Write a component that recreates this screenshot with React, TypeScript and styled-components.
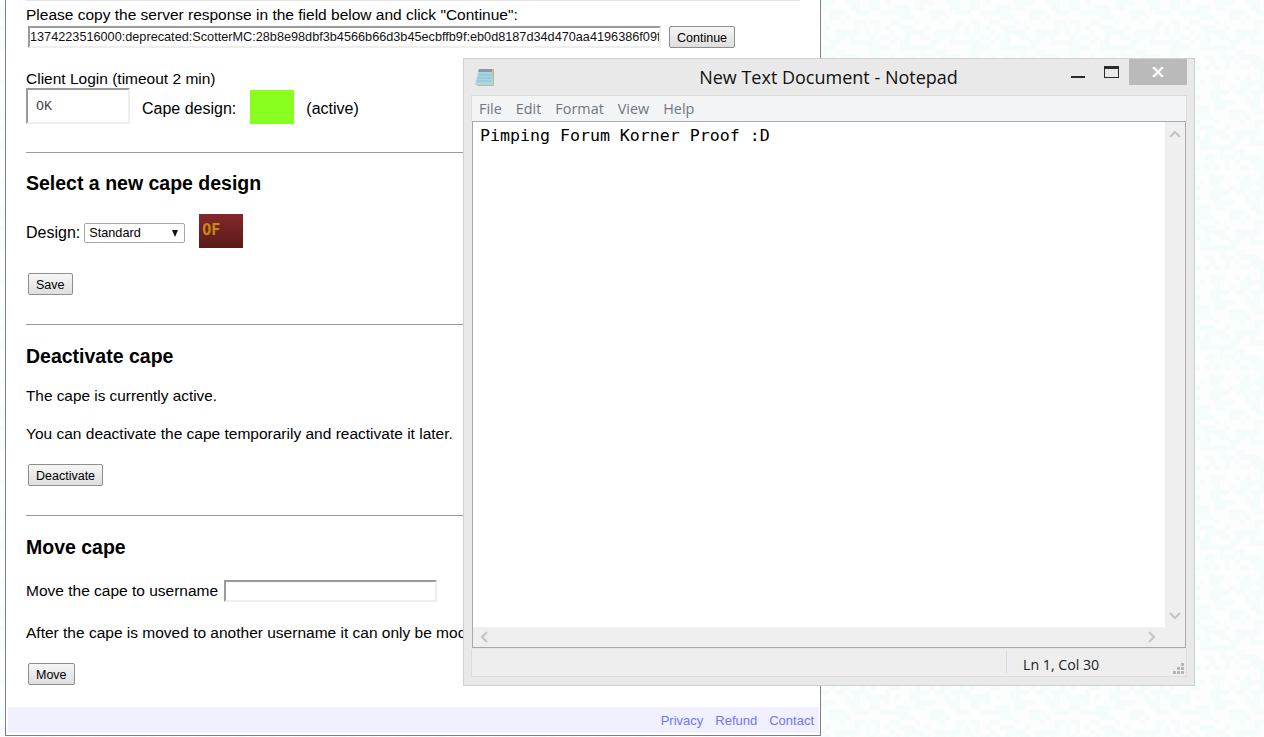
import React from 'react'
import styled, { createGlobalStyle } from 'styled-components'

// pale speckled page background, same tile repeated
const buildTile = () => {
  let cells = ''
  let seed = 7
  for (let y = 0; y < 100; y += 5) {
    for (let x = 0; x < 100; x += 5) {
      seed = (seed * 137 + 59) % 1009
      if (seed % 5 < 2) cells += `M${x} ${y}h${seed % 3 === 0 ? 10 : 5}v5h-${seed % 3 === 0 ? 10 : 5}z`
    }
  }
  const svg = `<svg xmlns='http://www.w3.org/2000/svg' width='100' height='100' shape-rendering='crispEdges'><path fill='#f4fcfc' d='${cells}'/></svg>`
  return `url("data:image/svg+xml,${encodeURIComponent(svg)}")`
}

const Global = createGlobalStyle`
  html, body {
    margin: 0;
    height: 737px;
    overflow: hidden;
    background-color: #fcfefe;
    background-image: ${buildTile()};
    font-family: "Liberation Sans", Arial, sans-serif;
    font-size: 16px;
    color: #000;
  }
`

const Page = styled.div`
  position: relative;
  width: 1264px;
  height: 737px;
  overflow: hidden;
`

const Panel = styled.div`
  box-sizing: border-box;
  width: 816px;
  height: 736px;
  margin-left: 5px;
  background: #fff;
  border-left: 1px solid #808080;
  border-right: 1px solid #808080;
  border-bottom: 1px solid #808080;
  padding: 0 1px 2px 2px;
  display: flex;
  flex-direction: column;
`

const Content = styled.div`
  flex: 1;
  padding: 0 19px 0 18px;
  font-size: 15.5px;
`

const TopRule = styled.div`
  height: 1px;
  background: #e4e4e4;
  margin-bottom: 5px;
`

const Line = styled.div`
  line-height: 18px;
  white-space: nowrap;
`

const Label = styled.span`
  font-size: 16px;
`

const ResponseRow = styled.div`
  display: flex;
  align-items: center;
  margin: 2px 0 0 2px;
`

const Inset = styled.div<{ $w: number; $h: number; $left?: number }>`
  box-sizing: border-box;
  width: ${p => p.$w}px;
  height: ${p => p.$h}px;
  margin-left: ${p => p.$left ?? 0}px;
  border: 2px solid;
  border-color: #9a9a9a #eeeeee #eeeeee #9a9a9a;
  background: #fff;
  overflow: hidden;
  white-space: nowrap;
`

const ResponseText = styled.div`
  font-size: 12.7px;
  line-height: 18px;
  color: #111;
`

const Button = styled.button<{ $left?: number }>`
  box-sizing: border-box;
  height: 22px;
  padding: 1px 7px 0;
  margin-left: ${p => p.$left ?? 0}px;
  border: 1px solid #8e8e8e;
  border-radius: 2px;
  background: linear-gradient(#f6f6f6, #dedede);
  font-family: "Liberation Sans", Arial, sans-serif;
  font-size: 12.5px;
  color: #000;
`

const LoginLabel = styled(Line)`
  margin-top: 22px;
`

const LoginRow = styled.div`
  display: flex;
  align-items: flex-end;
  height: 36px;
`

const OkText = styled.div`
  font-family: "Liberation Mono", monospace;
  font-size: 13.3px;
  line-height: 14px;
  padding: 10px 0 0 8px;
  color: #444;
`

const Swatch = styled.div`
  width: 44px;
  height: 34px;
  margin: 0 12px 0 14px;
  background: #88ff1e;
`

const RowLabel = styled(Label)<{ $left?: number }>`
  line-height: 30px;
  margin-left: ${p => p.$left ?? 0}px;
`

const Rule = styled.div<{ $top: number }>`
  height: 1px;
  background: #9a9a9a;
  margin-top: ${p => p.$top}px;
`

const Title = styled.h2<{ $top: number }>`
  margin: ${p => p.$top}px 0 0;
  font-size: 19.5px;
  line-height: 22px;
  font-weight: 700;
`

const DesignRow = styled.div`
  display: flex;
  align-items: center;
  height: 34px;
  margin-top: 20px;
`

const DesignLabel = styled(Label)`
  margin-top: 4px;
`

const FakeSelect = styled.div`
  box-sizing: border-box;
  display: flex;
  align-items: center;
  justify-content: space-between;
  width: 101px;
  height: 20px;
  margin: 4px 0 0 4px;
  padding: 0 6px 0 4px;
  border: 1px solid #a6a6a6;
  border-radius: 2px;
  font-size: 12.7px;
`

const Arrow = styled.span`
  width: 0;
  height: 0;
  border-left: 3.5px solid transparent;
  border-right: 3.5px solid transparent;
  border-top: 7px solid #111;
`

const CapeThumb = styled.div`
  box-sizing: border-box;
  width: 44px;
  height: 34px;
  margin-left: 14px;
  padding: 7px 0 0 3px;
  background: linear-gradient(#85282b, #5a1a1a);
  color: #c98a10;
  font-family: "DejaVu Sans Mono", monospace;
  font-size: 15px;
  line-height: 18px;
  font-weight: 700;
`

const ButtonRow = styled.div<{ $top: number }>`
  margin: ${p => p.$top}px 0 0 2px;
  height: 22px;
  display: flex;
`

const Para = styled(Line)<{ $top: number; $size?: number }>`
  margin-top: ${p => p.$top}px;
  font-size: ${p => p.$size ?? 15.5}px;
`

const MoveRow = styled.div`
  display: flex;
  align-items: center;
  height: 22px;
  margin-top: 22px;
`

const FooterBar = styled.div`
  display: flex;
  justify-content: flex-end;
  align-items: center;
  gap: 12px;
  height: 26px;
  padding-right: 5px;
  background: #f0f0fe;
  font-size: 13px;
`

const FooterLink = styled.a`
  color: #6f74ff;
  text-decoration: none;
`

/* floating notepad window */
const Notepad = styled.div`
  position: absolute;
  left: 463px;
  top: 58px;
  box-sizing: border-box;
  width: 732px;
  height: 628px;
  display: flex;
  flex-direction: column;
  padding: 0 7px 8px;
  background: #e9e9e9;
  border: 1px solid #cfcfcf;
`

const TitleBar = styled.div`
  position: relative;
  flex: none;
  height: 36px;
  display: flex;
  align-items: center;
  justify-content: center;
  padding-right: 1px;
  font-family: "Open Sans", "Noto Sans", sans-serif;
  font-size: 18px;
  color: #111;
`

const IconSlot = styled.div`
  position: absolute;
  left: 3px;
  top: 8px;
  line-height: 0;
`

const WinControls = styled.div`
  position: absolute;
  right: 0;
  top: 0;
  display: flex;
  align-items: flex-start;
`

const MinGlyph = styled.div`
  width: 14px;
  height: 2px;
  margin-top: 17px;
  background: #2a2a2a;
`

const MaxGlyph = styled.div`
  box-sizing: border-box;
  width: 15px;
  height: 12px;
  margin: 7px 0 0 19px;
  border: 1px solid #2a2a2a;
  border-top-width: 3px;
`

const CloseBtn = styled.div`
  width: 58px;
  height: 26px;
  margin-left: 10px;
  background: #bababa;
  line-height: 0;
  display: flex;
  align-items: center;
  justify-content: center;
`

const MenuBar = styled.div`
  flex: none;
  box-sizing: border-box;
  height: 26px;
  display: flex;
  align-items: center;
  gap: 14px;
  padding-left: 7px;
  background: #f3f4f6;
  border: 1px solid #dcdcdc;
  border-bottom: none;
  font-family: "Open Sans", "Noto Sans", sans-serif;
  font-size: 14.4px;
  color: #6f7680;
`

const EditArea = styled.div`
  flex: 1;
  box-sizing: border-box;
  display: grid;
  grid-template-columns: 1fr 20px;
  grid-template-rows: 1fr 20px;
  margin: 0 1px;
  background: #fff;
  border: 1px solid #a8a8ae;
  min-height: 0;
`

const EditText = styled.div`
  padding: 4px 0 0 7px;
  font-family: "DejaVu Sans Mono", monospace;
  font-size: 16.6px;
  line-height: 20px;
  color: #000;
`

const VScroll = styled.div`
  background: #efefef;
  display: flex;
  flex-direction: column;
  justify-content: space-between;
  align-items: center;
  padding: 7px 0 6px;
  line-height: 0;
`

const HScroll = styled.div`
  grid-column: 1 / 3;
  background: #efefef;
  display: flex;
  justify-content: space-between;
  align-items: center;
  padding: 0 28px 0 6px;
  line-height: 0;
`

const StatusBar = styled.div`
  flex: none;
  position: relative;
  box-sizing: border-box;
  height: 28px;
  margin-top: 1px;
  display: flex;
  justify-content: flex-end;
  background: #eeeeee;
  border: 1px solid #dcdcdc;
  border-top: none;
  font-family: "Open Sans", "Noto Sans", sans-serif;
  font-size: 14.2px;
  color: #222;
`

const StatusCell = styled.div`
  width: 180px;
  box-sizing: border-box;
  margin: 2px 0 3px;
  padding-left: 16px;
  border-left: 1px solid #dcdcdc;
  line-height: 28px;
`

const Grip = styled.svg`
  position: absolute;
  right: 1px;
  bottom: 1px;
`

const Chevron = ({ d }: { d: string }) => (
  <svg width="12" height="12" viewBox="0 0 12 12" fill="none" stroke="#c4c4c4" strokeWidth="2">
    <path d={d} />
  </svg>
)

const App = () => {
  return (
    <Page>
      <Global />
      <Panel>
        <Content>
          <TopRule />
          <Line>Please copy the server response in the field below and click "Continue":</Line>
          <ResponseRow>
            <Inset $w={633} $h={22}>
              <ResponseText>1374223516000:deprecated:ScotterMC:28b8e98dbf3b4566b66d3b45ecbffb9f:eb0d8187d34d470aa4196386f09f</ResponseText>
            </Inset>
            <Button $left={8}>Continue</Button>
          </ResponseRow>
          <LoginLabel>Client Login (timeout 2 min)</LoginLabel>
          <LoginRow>
            <Inset $w={104} $h={36}>
              <OkText>OK</OkText>
            </Inset>
            <RowLabel $left={12}>Cape design:</RowLabel>
            <Swatch />
            <RowLabel>(active)</RowLabel>
          </LoginRow>
          <Rule $top={28} />
          <Title $top={19}>Select a new cape design</Title>
          <DesignRow>
            <DesignLabel>Design:</DesignLabel>
            <FakeSelect>Standard<Arrow /></FakeSelect>
            <CapeThumb>OF</CapeThumb>
          </DesignRow>
          <ButtonRow $top={25}><Button>Save</Button></ButtonRow>
          <Rule $top={29} />
          <Title $top={20}>Deactivate cape</Title>
          <Para $top={20} $size={15.35}>The cape is currently active.</Para>
          <Para $top={20}>You can deactivate the cape temporarily and reactivate it later.</Para>
          <ButtonRow $top={21}><Button>Deactivate</Button></ButtonRow>
          <Rule $top={29} />
          <Title $top={20}>Move cape</Title>
          <MoveRow>
            <span>Move the cape to username</span>
            <Inset $w={213} $h={22} $left={6} />
          </MoveRow>
          <Para $top={22}>After the cape is moved to another username it can only be modified with the new account.</Para>
          <ButtonRow $top={21}><Button>Move</Button></ButtonRow>
        </Content>
        <FooterBar>
          <FooterLink>Privacy</FooterLink>
          <FooterLink>Refund</FooterLink>
          <FooterLink>Contact</FooterLink>
        </FooterBar>
      </Panel>

      <Notepad>
        <TitleBar>
          <IconSlot>
            <svg width="22" height="22" viewBox="0 0 22 22">
              <path d="M6 2h14v17H3z" fill="#c9b98a" />
              <path d="M5 2h13l1 16H1z" fill="#a5d6e2" />
              <path d="M5 2h13v3H4z" fill="#8a9aa0" />
              <path d="M5 8h12M4 11h13M3 14h14" stroke="#8cc2d2" strokeWidth="1" />
            </svg>
          </IconSlot>
          New Text Document - Notepad
          <WinControls>
            <MinGlyph />
            <MaxGlyph />
            <CloseBtn>
              <svg width="12" height="10" viewBox="0 0 12 10" stroke="#fff" strokeWidth="2.4" fill="none">
                <path d="M1 0l10 10M11 0L1 10" />
              </svg>
            </CloseBtn>
          </WinControls>
        </TitleBar>
        <MenuBar>
          <span>File</span>
          <span>Edit</span>
          <span>Format</span>
          <span>View</span>
          <span>Help</span>
        </MenuBar>
        <EditArea>
          <EditText>Pimping Forum Korner Proof :D</EditText>
          <VScroll>
            <Chevron d="M1 8l5-5 5 5" />
            <Chevron d="M1 4l5 5 5-5" />
          </VScroll>
          <HScroll>
            <Chevron d="M8 1L3 6l5 5" />
            <Chevron d="M4 1l5 5-5 5" />
          </HScroll>
        </EditArea>
        <StatusBar>
          <StatusCell>Ln 1, Col 30</StatusCell>
          <Grip width="12" height="12" viewBox="0 0 12 12" fill="#b4b4b4">
            <path d="M8 0h3v3H8zM4 4h3v3H4zM8 4h3v3H8zM0 8h3v3H0zM4 8h3v3H4zM8 8h3v3H8z" />
          </Grip>
        </StatusBar>
      </Notepad>
    </Page>
  )
}

export default App
